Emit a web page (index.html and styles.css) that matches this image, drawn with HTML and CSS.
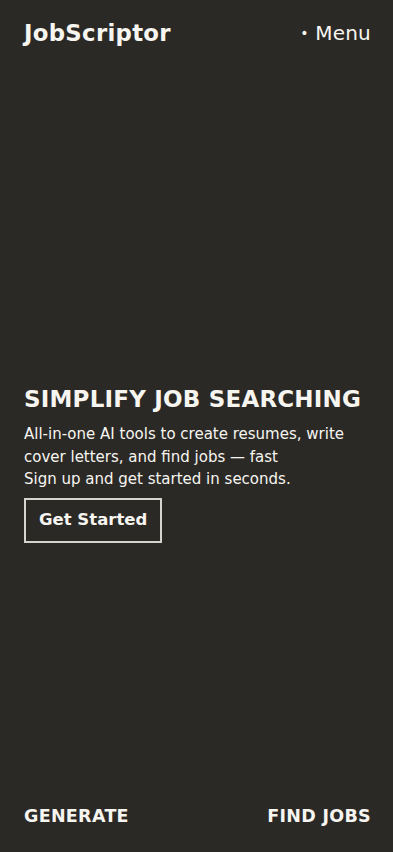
FILE: index.html
```html
<!DOCTYPE html>
<html lang="en">
<head>
<meta charset="utf-8">
<meta name="viewport" content="width=device-width, initial-scale=1">
<title>JobScriptor</title>
<link rel="stylesheet" href="styles.css">
</head>
<body>
<div class="page">
  <header class="topbar">
    <div class="logo">JobScriptor</div>
    <nav class="menu"><span class="dot">•</span> Menu</nav>
  </header>
  <main class="hero">
    <h1 class="hero-title">SIMPLIFY JOB SEARCHING</h1>
    <p class="hero-text">All-in-one AI tools to create resumes, write cover letters, and find jobs — fast<br>Sign up and get started in seconds.</p>
    <a class="btn" href="#">Get Started</a>
  </main>
  <footer class="bottom">
    <a class="bottom-link" href="#">GENERATE</a>
    <a class="bottom-link" href="#">FIND JOBS</a>
  </footer>
</div>
</body>
</html>
```
FILE: styles.css
```css
* { box-sizing: border-box; }
html, body { margin: 0; padding: 0; }
body {
  background: #2b2926;
  color: #f7f5f0;
  font-family: "DejaVu Sans", "Open Sans", sans-serif;
}
.page {
  height: 852px;
  display: flex;
  flex-direction: column;
  padding: 0 22px 0 24px;
}
.topbar {
  display: flex;
  justify-content: space-between;
  align-items: center;
  height: 66px;
}
.logo {
  font-size: 22.8px;
  font-weight: 700;
  letter-spacing: 0.3px;
}
.menu {
  font-size: 20px;
  font-weight: 400;
  letter-spacing: 0.2px;
}
.dot { font-size: 14px; vertical-align: 2px; margin-right: 0; }
.hero {
  margin-top: 319px;
}
.hero-title {
  margin: 0 0 10px;
  font-size: 23px;
  font-weight: 700;
  line-height: 28px;
  letter-spacing: 0.2px;
}
.hero-text {
  margin: 0 0 7px;
  font-size: 15px;
  line-height: 22.5px;
  max-width: 335px;
}
.btn {
  display: inline-block;
  border: 2px solid #d6d4cf;
  color: #f7f5f0;
  text-decoration: none;
  font-weight: 700;
  font-size: 16.5px;
  line-height: 20px;
  padding: 10.5px 13px;
}
.bottom {
  margin-top: auto;
  display: flex;
  justify-content: space-between;
  padding-bottom: 26px;
}
.bottom-link {
  color: #f7f5f0;
  text-decoration: none;
  font-weight: 700;
  font-size: 17.5px;
  letter-spacing: 0.3px;
}
```
